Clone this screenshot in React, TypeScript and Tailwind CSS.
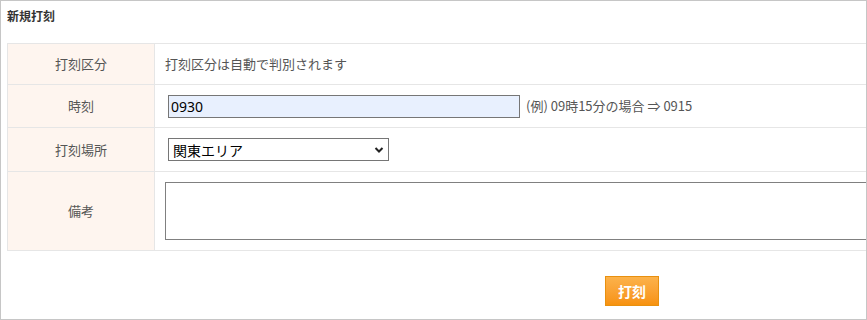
import { useState } from 'react'

const font = "font-['Noto_Sans_CJK_JP','Noto_Sans',sans-serif]"

export default function App() {
  const [time, setTime] = useState('0930')
  const [place, setPlace] = useState('kanto')
  const [memo, setMemo] = useState('')

  return (
    <div className={`w-[867px] h-[320px] overflow-hidden border border-[#c6c6c6] bg-white ${font} text-[#555]`}>
      <div className="w-[1262px]">
        {/* Title */}
        <div className="h-[42px] px-[6px] pt-[7px] text-[12px] leading-[16px] font-bold text-[#333]">
          新規打刻
        </div>

        {/* Form table */}
        <div className="mx-[6px] border-t border-l border-[#e6e6e6] text-[13px]">
          <div className="flex h-[41px] border-b border-[#e6e6e6]">
            <div className="w-[147px] shrink-0 flex items-center justify-center bg-[#fef5ef] border-r border-[#e6e6e6]">
              打刻区分
            </div>
            <div className="flex-1 flex items-center pl-[10px] border-r border-[#e6e6e6]">
              打刻区分は自動で判別されます
            </div>
          </div>

          <div className="flex h-[43px] border-b border-[#e6e6e6]">
            <div className="w-[147px] shrink-0 flex items-center justify-center bg-[#fef5ef] border-r border-[#e6e6e6]">
              時刻
            </div>
            <div className="flex-1 flex items-center pl-[13px] border-r border-[#e6e6e6]">
              <input
                value={time}
                onChange={(e) => setTime(e.target.value)}
                className="w-[352px] h-[23px] px-[2px] border border-[#767676] bg-[#e8f0fe] text-black text-[14px] font-['Noto_Sans',sans-serif] outline-none"
              />
              <span className="ml-[6px]">(例) 09時15分の場合 ⇒ 0915</span>
            </div>
          </div>

          <div className="flex h-[44px] border-b border-[#e6e6e6]">
            <div className="w-[147px] shrink-0 flex items-center justify-center bg-[#fef5ef] border-r border-[#e6e6e6]">
              打刻場所
            </div>
            <div className="flex-1 flex items-center pl-[13px] border-r border-[#e6e6e6]">
              <div className="relative w-[221px] h-[23px] border border-[#767676] bg-white">
                <select
                  value={place}
                  onChange={(e) => setPlace(e.target.value)}
                  className="appearance-none w-full h-full pl-[4px] text-black text-[14px] leading-[20px] outline-none"
                >
                  <option value="kanto">関東エリア</option>
                  <option value="kansai">関西エリア</option>
                </select>
                <svg
                  className="absolute right-[4px] top-[6px] w-[10px] h-[10px] pointer-events-none"
                  viewBox="0 0 10 10"
                  fill="none"
                  stroke="#222"
                  strokeWidth="2"
                >
                  <path d="M1.5 3 L5 6.5 L8.5 3" />
                </svg>
              </div>
            </div>
          </div>

          <div className="flex h-[79px] border-b border-[#e6e6e6]">
            <div className="w-[147px] shrink-0 flex items-center justify-center bg-[#fef5ef] border-r border-[#e6e6e6]">
              備考
            </div>
            <div className="flex-1 flex items-center pl-[10px] border-r border-[#e6e6e6]">
              <textarea
                value={memo}
                onChange={(e) => setMemo(e.target.value)}
                className="w-[900px] h-[58px] border border-[#808080] bg-white resize-none outline-none"
              />
            </div>
          </div>
        </div>

        {/* Submit */}
        <div className="flex justify-center pt-[25px]">
          <button className="w-[54px] h-[30px] border border-[#e8900f] bg-gradient-to-b from-[#fcb24a] to-[#f7920c] text-white text-[14px] font-bold leading-none">
            打刻
          </button>
        </div>
      </div>
    </div>
  )
}
